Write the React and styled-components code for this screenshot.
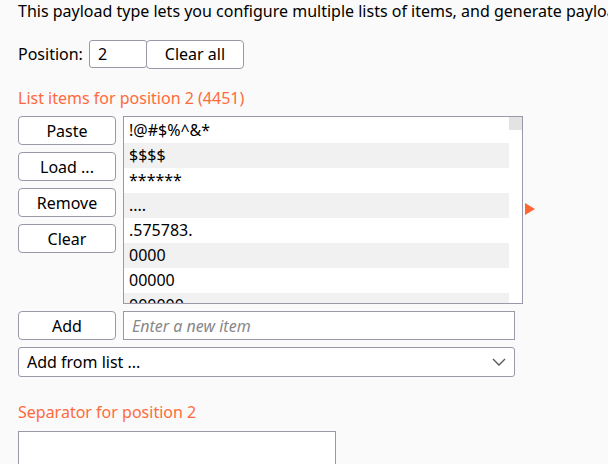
import React, {useState} from 'react';
import styled, {createGlobalStyle} from "styled-components";

const GlobalStyle = createGlobalStyle`
  html, body {
    margin: 0;
    padding: 0;
    background: #fafafa;
  }
  body {
    font-family: "Noto Sans", "Open Sans", sans-serif;
    font-size: 16px;
    color: #000;
  }
`;

const items = ['!@#$%^&*', '$$$$', '******', '....', '.575783.', '0000', '00000', '000000'];

const App = () => {
    const [position, setPosition] = useState('2');
    const [newItem, setNewItem] = useState('');

    return (
        <Page>
            <GlobalStyle/>
            <Intro>This payload type lets you configure multiple lists of items, and generate payloads based on all permutations of items in the lists.</Intro>

            <PositionRow>
                <span>Position:</span>
                <PositionInput value={position} onChange={(e) => setPosition(e.target.value)}/>
                <Button type='button' $width={98}>Clear all</Button>
            </PositionRow>

            <Heading>List items for position 2 (4451)</Heading>

            <ListArea>
                <ButtonColumn>
                    <Button type='button'>Paste</Button>
                    <Button type='button'>Load ...</Button>
                    <Button type='button'>Remove</Button>
                    <Button type='button'>Clear</Button>
                </ButtonColumn>
                <ListBox>
                    <Rows>
                        {items.map((item, i) => (
                            <Row key={item} $odd={i % 2 === 1}>{item}</Row>
                        ))}
                    </Rows>
                    <ScrollTrack>
                        <ScrollThumb/>
                    </ScrollTrack>
                </ListBox>
                <Arrow/>
            </ListArea>

            <AddRow>
                <Button type='button'>Add</Button>
                <ItemInput
                    placeholder='Enter a new item'
                    value={newItem}
                    onChange={(e) => setNewItem(e.target.value)}
                />
            </AddRow>

            <SelectBox>
                <span>Add from list ...</span>
                <svg width="14" height="8" viewBox="0 0 14 8">
                    <path d="M1 1 L7 7 L13 1" fill="none" stroke="#555" strokeWidth="1.3"/>
                </svg>
            </SelectBox>

            <Heading $top={24}>Separator for position 2</Heading>
            <Separator/>
        </Page>
    );
};

const Page = styled.div`
  padding: 0 18px;
  width: 590px;
  height: 464px;
  overflow: hidden;
`;

const Intro = styled.div`
  white-space: nowrap;
  line-height: 22px;
`;

const PositionRow = styled.div`
  display: flex;
  align-items: center;
  margin-top: 18px;
  height: 28px;

  span {
    margin-right: 6px;
  }
`;

const PositionInput = styled.input`
  box-sizing: border-box;
  width: 58px;
  height: 28px;
  border: 1px solid #9b99a9;
  border-radius: 3px;
  padding: 0 8px;
  font: inherit;
  background: #fff;
  margin-right: -1px;
  outline: none;
`;

const Button = styled.button`
  box-sizing: border-box;
  width: ${p => p.$width || 98}px;
  height: 29px;
  border: 1px solid #9b99a9;
  border-radius: 4px;
  background: #fff;
  font: inherit;
  color: #000;
  padding: 0;
  flex-shrink: 0;
`;

const Heading = styled.div`
  color: #ff6a3d;
  line-height: 22px;
  margin-top: ${p => p.$top || 19}px;
`;

const ListArea = styled.div`
  display: flex;
  align-items: flex-start;
  margin-top: 7px;
`;

const ButtonColumn = styled.div`
  display: flex;
  flex-direction: column;
  gap: 7px;
  margin-right: 7px;
`;

const ListBox = styled.div`
  box-sizing: border-box;
  width: 400px;
  height: 188px;
  border: 1px solid #9b99a9;
  background: #fff;
  display: flex;
  overflow: hidden;
`;

const Rows = styled.div`
  flex: 1;
  padding-top: 1px;
`;

const Row = styled.div`
  height: 25px;
  line-height: 25px;
  padding-left: 5px;
  background: ${p => p.$odd ? '#f1f1f1' : '#fff'};
  white-space: nowrap;
`;

const ScrollTrack = styled.div`
  width: 13px;
  background: #fff;
`;

const ScrollThumb = styled.div`
  height: 13px;
  background: #e3e3e3;
`;

const Arrow = styled.div`
  width: 0;
  height: 0;
  margin-top: 87px;
  margin-left: 2px;
  border-top: 6px solid transparent;
  border-bottom: 6px solid transparent;
  border-left: 10px solid #ff6633;
`;

const AddRow = styled.div`
  display: flex;
  gap: 7px;
  margin-top: 7px;
`;

const ItemInput = styled.input`
  box-sizing: border-box;
  width: 392px;
  height: 29px;
  border: 1px solid #9b99a9;
  background: #fff;
  padding: 0 8px;
  font: inherit;
  outline: none;

  &::placeholder {
    color: #888;
    font-style: italic;
  }
`;

const SelectBox = styled.div`
  box-sizing: border-box;
  width: 497px;
  height: 30px;
  margin-top: 7px;
  border: 1px solid #9b99a9;
  border-radius: 3px;
  background: #fff;
  display: flex;
  align-items: center;
  justify-content: space-between;
  padding: 0 8px 0 8px;
`;

const Separator = styled.div`
  box-sizing: border-box;
  width: 318px;
  height: 60px;
  margin-top: 8px;
  border: 1px solid #9b99a9;
  background: #fff;
`;

export default App;
